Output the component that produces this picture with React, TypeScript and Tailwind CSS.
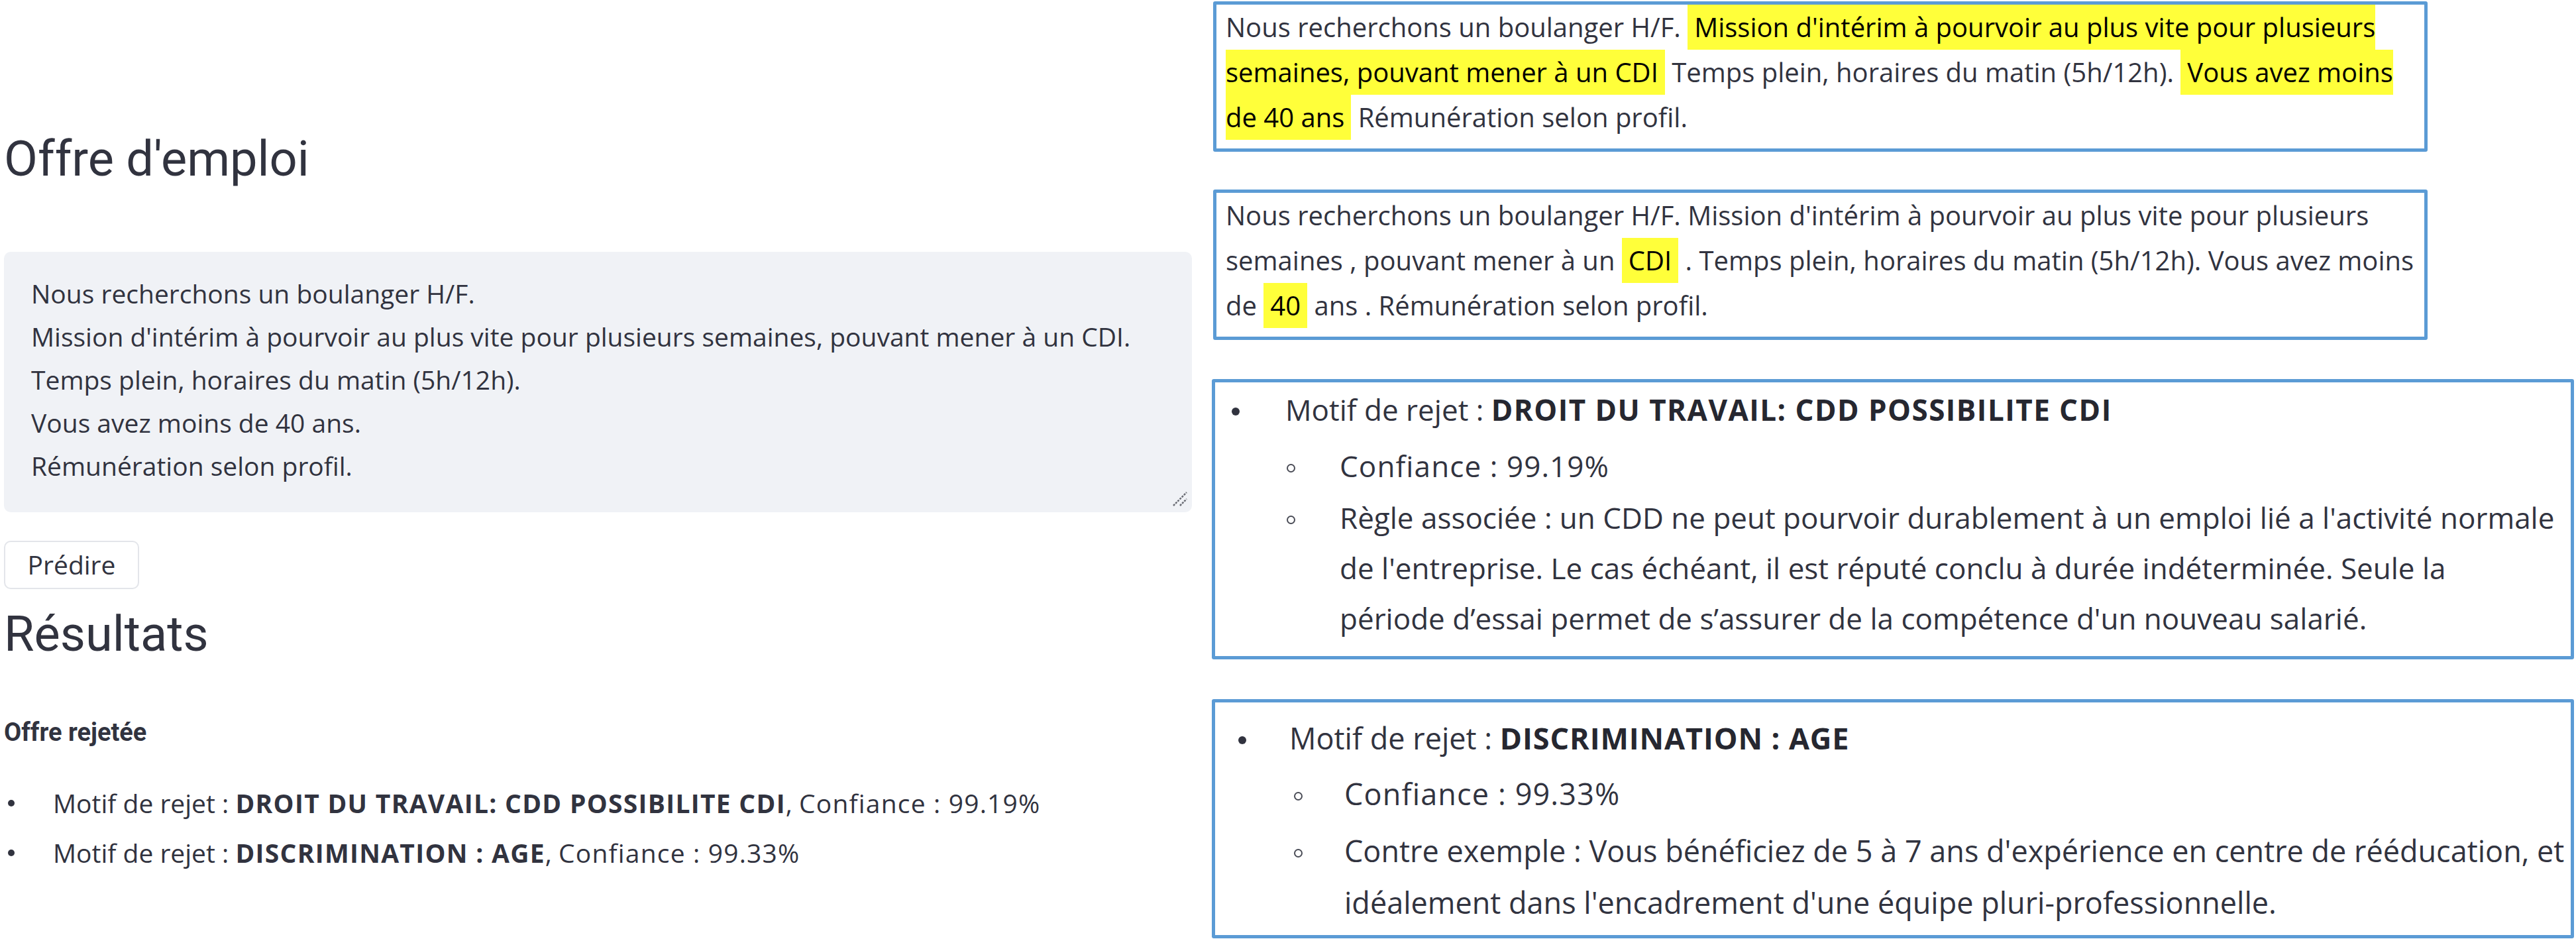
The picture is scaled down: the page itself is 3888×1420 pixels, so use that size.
import * as React from 'react'

function Mark({ className, children }: { className?: string; children: React.ReactNode }) {
  return <span className={`inline-block bg-[#ffff3a] text-black ${className ?? ''}`}>{children}</span>
}

function ResizeHandle() {
  return (
    <svg
      viewBox="0 0 24 24"
      className="absolute right-[6px] bottom-[8px] h-[24px] w-[24px]"
      fill="none"
      aria-hidden="true"
    >
      <path d="M2 22L22 2M12 22L22 12" stroke="#6b6d75" strokeWidth="2.5" strokeDasharray="3 1.5" />
    </svg>
  )
}

export default function App() {
  return (
    <div className="flex h-[1420px] w-[3888px] overflow-hidden bg-white font-['Open_Sans','Noto_Sans',sans-serif] text-[#31333f]">
      {/* Left: Streamlit app */}
      <div className="flex w-[1829px] shrink-0 flex-col pt-[195px] pr-[30px] pl-[6px]">
        <h2 className="font-['Roboto',sans-serif] text-[74px] leading-[90px] font-normal">Offre d'emploi</h2>

        <div className="relative mt-[95px] h-[393px] rounded-[10px] bg-[#f0f2f6] pt-[30px] pl-[41px] text-[39px] leading-[65px]">
          <div>Nous recherchons un boulanger H/F.</div>
          <div>Mission d'intérim à pourvoir au plus vite pour plusieurs semaines, pouvant mener à un CDI.</div>
          <div>Temps plein, horaires du matin (5h/12h).</div>
          <div>Vous avez moins de 40 ans.</div>
          <div>Rémunération selon profil.</div>
          <ResizeHandle />
        </div>

        <button className="mt-[43px] h-[73px] w-[204px] self-start rounded-[10px] border-2 border-[#e3e5ea] bg-white text-[39px] text-[#31333f]">
          Prédire
        </button>

        <h2 className="mt-[23px] font-['Roboto',sans-serif] text-[74px] leading-[90px] font-normal">Résultats</h2>

        <h6 className="mt-[78px] font-['Roboto',sans-serif] text-[38px] leading-[50px] font-bold">Offre rejetée</h6>

        <ul className="mt-[49px] flex flex-col gap-[10px] text-[39px] leading-[65px]">
          <li className="flex items-center whitespace-nowrap">
            <span className="mr-[58px] ml-[6px] h-[10px] w-[10px] rounded-full bg-[#31333f]" />
            <span>
              Motif de rejet : <b className="font-bold tracking-[0.033em]">DROIT DU TRAVAIL: CDD POSSIBILITE CDI</b>,{' '}
              <span className="tracking-[0.03em]">Confiance : 99.19%</span>
            </span>
          </li>
          <li className="flex items-center whitespace-nowrap">
            <span className="mr-[58px] ml-[6px] h-[10px] w-[10px] rounded-full bg-[#31333f]" />
            <span>
              Motif de rejet : <b className="font-bold tracking-[0.033em]">DISCRIMINATION : AGE</b>,{' '}
              <span className="tracking-[0.03em]">Confiance : 99.33%</span>
            </span>
          </li>
        </ul>
      </div>

      {/* Right: annotated boxes */}
      <div className="flex flex-1 flex-col pt-[2px]">
        {/* highlighted spans */}
        <div className="ml-[2px] w-[1833px] rounded-[3px] border-[5px] border-[#5b9bd5] pb-[13px] pl-[14px] text-[40px] leading-[68px] whitespace-nowrap">
          <div className="h-[68px]">
            Nous recherchons un boulanger H/F.{' '}
            <Mark className="pl-[10px]">Mission d'intérim à pourvoir au plus vite pour plusieurs</Mark>
          </div>
          <div className="h-[68px]">
            <Mark className="pr-[10px]">semaines, pouvant mener à un CDI</Mark> Temps plein, horaires du matin (5h/12h).{' '}
            <Mark className="pl-[10px]">Vous avez moins</Mark>
          </div>
          <div className="h-[68px]">
            <Mark className="pr-[10px]">de 40 ans</Mark> Rémunération selon profil.
          </div>
        </div>

        {/* tokens */}
        <div className="mt-[57px] ml-[2px] w-[1833px] rounded-[3px] border-[5px] border-[#5b9bd5] pb-[13px] pl-[14px] text-[40px] leading-[68px] whitespace-nowrap">
          <div className="h-[68px]">
            Nous recherchons un boulanger H/F. Mission d'intérim à pourvoir au plus vite pour plusieurs
          </div>
          <div className="h-[68px]">
            semaines , pouvant mener à un <Mark className="px-[10px]">CDI</Mark> . Temps plein, horaires du matin
            (5h/12h). Vous avez moins
          </div>
          <div className="h-[68px]">
            de <Mark className="px-[10px]">40</Mark> ans . Rémunération selon profil.
          </div>
        </div>

        {/* reason 1 */}
        <div className="mt-[59px] w-[2056px] rounded-[3px] border-[5px] border-[#5b9bd5] pt-[3px] pb-[19px] text-[44px] leading-[76px]">
          <div className="flex">
            <span className="flex h-[76px] w-[106px] shrink-0 items-center pl-[25px]">
              <span className="mt-[6px] h-[12px] w-[12px] rounded-full bg-[#31333f]" />
            </span>
            <span className="whitespace-nowrap">
              Motif de rejet :{' '}
              <b className="font-bold tracking-[0.033em] text-[#262730]">DROIT DU TRAVAIL: CDD POSSIBILITE CDI</b>
            </span>
          </div>
          <div className="mt-[9px] flex pl-[106px]">
            <span className="flex h-[76px] w-[82px] shrink-0 items-center pl-[2px]">
              <span className="mt-[6px] h-[13px] w-[13px] rounded-full border-[2.5px] border-[#4a4c56]" />
            </span>
            <span className="whitespace-nowrap tracking-[0.025em]">Confiance : 99.19%</span>
          </div>
          <div className="mt-[2px] flex pl-[106px]">
            <span className="flex h-[76px] w-[82px] shrink-0 items-center pl-[2px]">
              <span className="mt-[6px] h-[13px] w-[13px] rounded-full border-[2.5px] border-[#4a4c56]" />
            </span>
            <span className="whitespace-nowrap">
              Règle associée : un CDD ne peut pourvoir durablement à un emploi lié a l'activité normale
              <br />
              de l'entreprise. Le cas échéant, il est réputé conclu à durée indéterminée. Seule la
              <br />
              période d’essai permet de s’assurer de la compétence d'un nouveau salarié.
            </span>
          </div>
        </div>

        {/* reason 2 */}
        <div className="mt-[60px] w-[2056px] rounded-[3px] border-[5px] border-[#5b9bd5] pt-[15px] pb-[10px] text-[45px] leading-[78px]">
          <div className="flex">
            <span className="flex h-[78px] w-[112px] shrink-0 items-center pl-[35px]">
              <span className="mt-[6px] h-[12px] w-[12px] rounded-full bg-[#31333f]" />
            </span>
            <span className="whitespace-nowrap">
              Motif de rejet : <b className="font-bold tracking-[0.02em] text-[#262730]">DISCRIMINATION : AGE</b>
            </span>
          </div>
          <div className="mt-[6px] flex pl-[112px]">
            <span className="flex h-[78px] w-[83px] shrink-0 items-center pl-[7px]">
              <span className="mt-[6px] h-[13px] w-[13px] rounded-full border-[2.5px] border-[#4a4c56]" />
            </span>
            <span className="whitespace-nowrap tracking-[0.025em]">Confiance : 99.33%</span>
          </div>
          <div className="mt-[8px] flex pl-[112px]">
            <span className="flex h-[78px] w-[83px] shrink-0 items-center pl-[7px]">
              <span className="mt-[6px] h-[13px] w-[13px] rounded-full border-[2.5px] border-[#4a4c56]" />
            </span>
            <span className="whitespace-nowrap">
              Contre exemple : Vous bénéficiez de 5 à 7 ans d'expérience en centre de rééducation, et
              <br />
              idéalement dans l'encadrement d'une équipe pluri-professionnelle.
            </span>
          </div>
        </div>
      </div>
    </div>
  )
}
